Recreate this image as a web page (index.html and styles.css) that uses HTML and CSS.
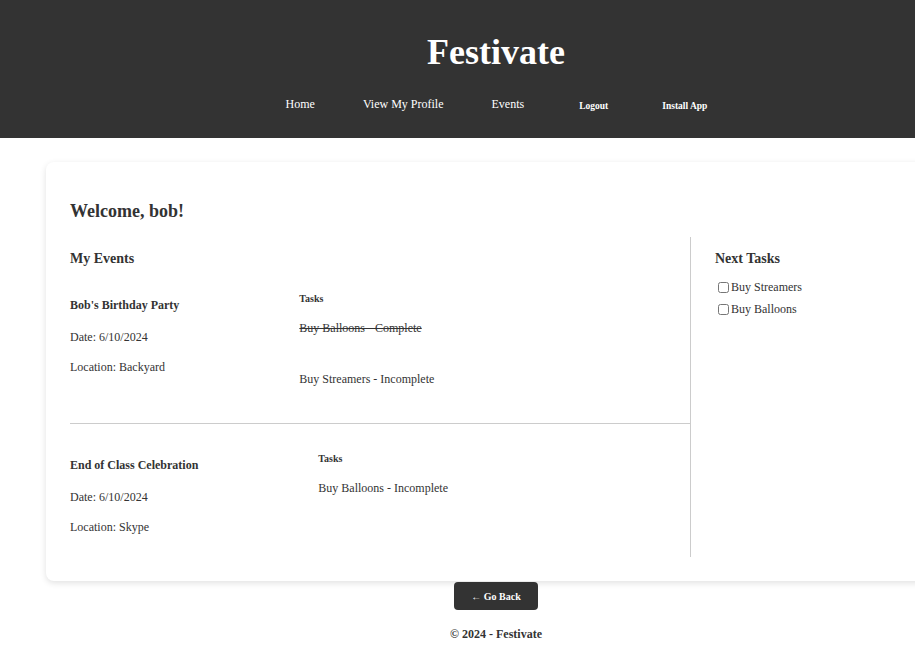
FILE: index.html
```html
<!DOCTYPE html>
<html lang="en">
<head>
<meta charset="utf-8">
<title>Festivate</title>
<link rel="stylesheet" href="styles.css">
</head>
<body>
<div class="page">
  <header class="site-header">
    <h1 class="brand">Festivate</h1>
    <nav class="nav">
      <a class="nav-link" href="#">Home</a>
      <a class="nav-link" href="#">View My Profile</a>
      <a class="nav-link" href="#">Events</a>
      <button class="nav-btn" type="button">Logout</button>
      <button class="nav-btn" type="button">Install App</button>
    </nav>
  </header>

  <main class="card">
    <h2 class="welcome">Welcome, bob!</h2>
    <div class="columns">
      <section class="events">
        <h3 class="section-title">My Events</h3>
        <div class="event">
          <div class="event-info">
            <h4 class="event-name">Bob's Birthday Party</h4>
            <p class="event-line">Date: 6/10/2024</p>
            <p class="event-line">Location: Backyard</p>
          </div>
          <div class="event-tasks">
            <h5 class="tasks-title">Tasks</h5>
            <p class="task done">Buy Balloons - Complete</p>
            <p class="task">Buy Streamers - Incomplete</p>
          </div>
        </div>
        <div class="event">
          <div class="event-info">
            <h4 class="event-name">End of Class Celebration</h4>
            <p class="event-line">Date: 6/10/2024</p>
            <p class="event-line">Location: Skype</p>
          </div>
          <div class="event-tasks">
            <h5 class="tasks-title">Tasks</h5>
            <p class="task">Buy Balloons - Incomplete</p>
          </div>
        </div>
      </section>
      <aside class="next">
        <h3 class="section-title next-title">Next Tasks</h3>
        <label class="next-item"><input type="checkbox" class="check">Buy Streamers</label>
        <label class="next-item"><input type="checkbox" class="check">Buy Balloons</label>
      </aside>
    </div>
  </main>

  <div class="back-wrap">
    <button class="back-btn" type="button">&larr; Go Back</button>
  </div>
  <footer class="footer">&copy; 2024 - Festivate</footer>
</div>
</body>
</html>
```

FILE: styles.css
```css
html {
  overflow: hidden;
}

body {
  margin: 0;
  font-family: "Liberation Serif", "Times New Roman", serif;
  font-size: 12px;
  color: #333;
  background: #fff;
}

.page {
  width: 992px;
}

.site-header {
  background: #333;
  color: #fff;
  padding: 8px 0 27px;
  text-align: center;
}

.brand {
  margin: 24px 0;
  font-size: 36px;
  font-weight: bold;
  line-height: 41px;
}

.nav {
  display: flex;
  justify-content: center;
  align-items: center;
  height: 14px;
}

.nav-link {
  color: #fff;
  text-decoration: none;
  font-size: 12px;
  margin: 0 24px;
}

.nav-btn {
  background: none;
  border: 0;
  color: #fff;
  font-family: "Liberation Serif", "Times New Roman", serif;
  font-size: 9.5px;
  font-weight: bold;
  padding: 4px 4px 0;
  margin: 0 19px 0 27px;
}

.card {
  display: block;
  margin: 24px 46px 0;
  padding: 24px;
  background: #fff;
  border-radius: 8px;
  box-shadow: 0 2px 6px rgba(0, 0, 0, 0.12);
}

.welcome {
  margin: 15px 0;
  font-size: 18px;
  line-height: 21px;
}

.columns {
  display: grid;
  grid-template-columns: 620px 1fr;
}

.events {
  padding-bottom: 7px;
}

.section-title {
  font-size: 14px;
  line-height: 16px;
  margin: 14px 0;
}

.event {
  display: flex;
  gap: 120px;
  border-top: 1px solid #ccc;
  padding-top: 17px;
}

.event:first-of-type {
  border-top: 0;
  padding-top: 0;
}

.event-name {
  font-size: 12px;
  line-height: 14px;
  margin: 17px 0 18px;
}

.event-line {
  margin: 16px 0;
  line-height: 14px;
}

.event-tasks {
  display: flex;
  flex-direction: column;
}

.tasks-title {
  font-size: 10px;
  line-height: 12px;
  margin: 12px 0 16px;
}

.task {
  margin: 0 0 37px;
  line-height: 14px;
}

.done {
  text-decoration: line-through;
}

.next {
  border-left: 1px solid #ccc;
  padding-left: 24px;
}

.next-title {
  margin-bottom: 9px;
}

.next-item {
  display: flex;
  align-items: center;
  height: 22px;
}

.check {
  width: 11px;
  height: 11px;
  margin: 0 2px 0 3px;
}

.back-wrap {
  display: flex;
  justify-content: center;
  padding-top: 1px;
}

.back-btn {
  background: #333;
  color: #fff;
  border: 0;
  border-radius: 4px;
  height: 28px;
  padding: 0 17px;
  font-family: "Liberation Serif", "Times New Roman", serif;
  font-size: 10px;
  font-weight: bold;
}

.footer {
  text-align: center;
  font-weight: bold;
  margin-top: 17px;
  line-height: 14px;
}
```
